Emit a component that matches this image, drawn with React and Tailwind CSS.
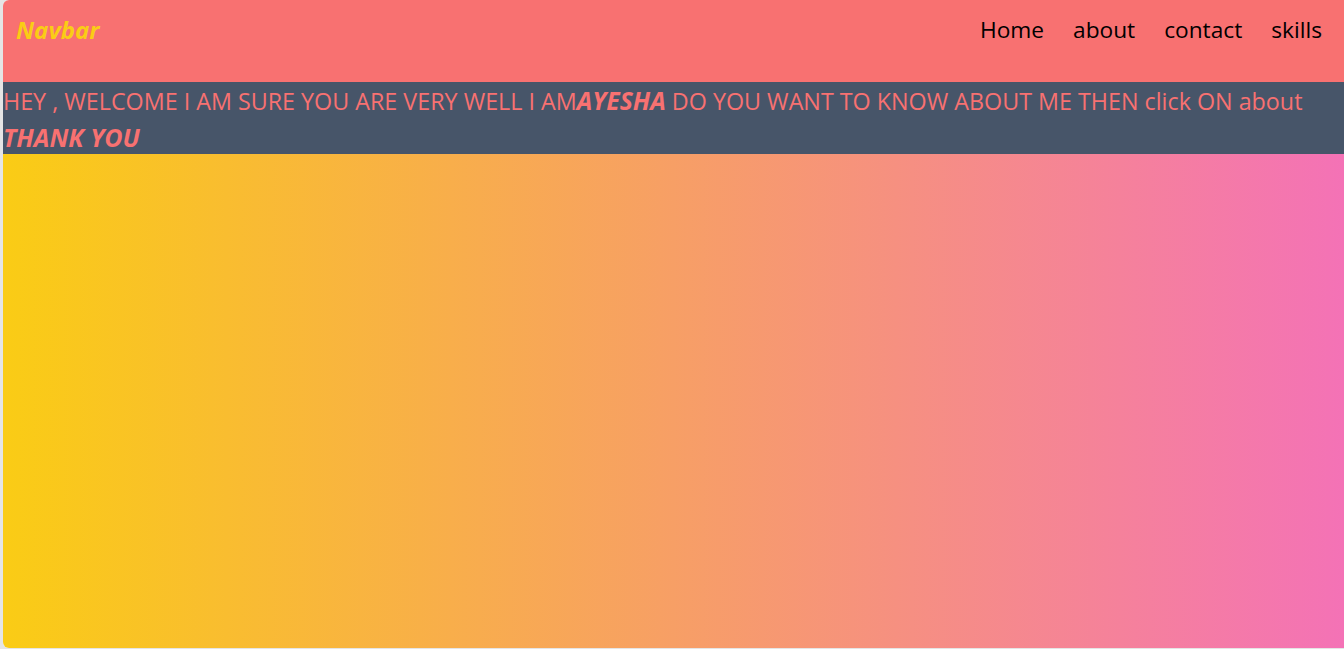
export default function App() {
  const font = { fontFamily: '"Open Sans", "Noto Sans", sans-serif' };
  return (
    <div className="w-[1344px] h-[649px] bg-[#e5e5e5] overflow-hidden" style={font}>
      <div className="ml-[3px] h-[648px] flex flex-col rounded-l-[6px] overflow-hidden bg-white">
        <nav className="h-[82px] shrink-0 bg-[#f87171] flex items-start justify-between pl-[13px] pr-[22px] pt-[15px]">
          <span className="text-[#facc15] font-bold italic text-[24px] leading-[30px]">Navbar</span>
          <ul className="flex gap-[29px] text-black text-[22.7px] leading-[30px]">
            <li>Home</li>
            <li>about</li>
            <li>contact</li>
            <li>skills</li>
          </ul>
        </nav>
        <div className="h-[72px] shrink-0 overflow-hidden bg-[#475569] text-[#f87171] text-[23.3px] leading-[36px]">
          HEY , WELCOME I AM SURE YOU ARE VERY WELL I AM<b className="italic text-[24.8px] leading-[36px]">AYESHA</b> DO YOU WANT TO KNOW ABOUT ME THEN click ON about <b className="italic text-[25px] leading-[36px]">THANK YOU</b>
        </div>
        <div className="flex-1 bg-[linear-gradient(to_right,#facc15,#f472b6)]"></div>
      </div>
    </div>
  );
}
